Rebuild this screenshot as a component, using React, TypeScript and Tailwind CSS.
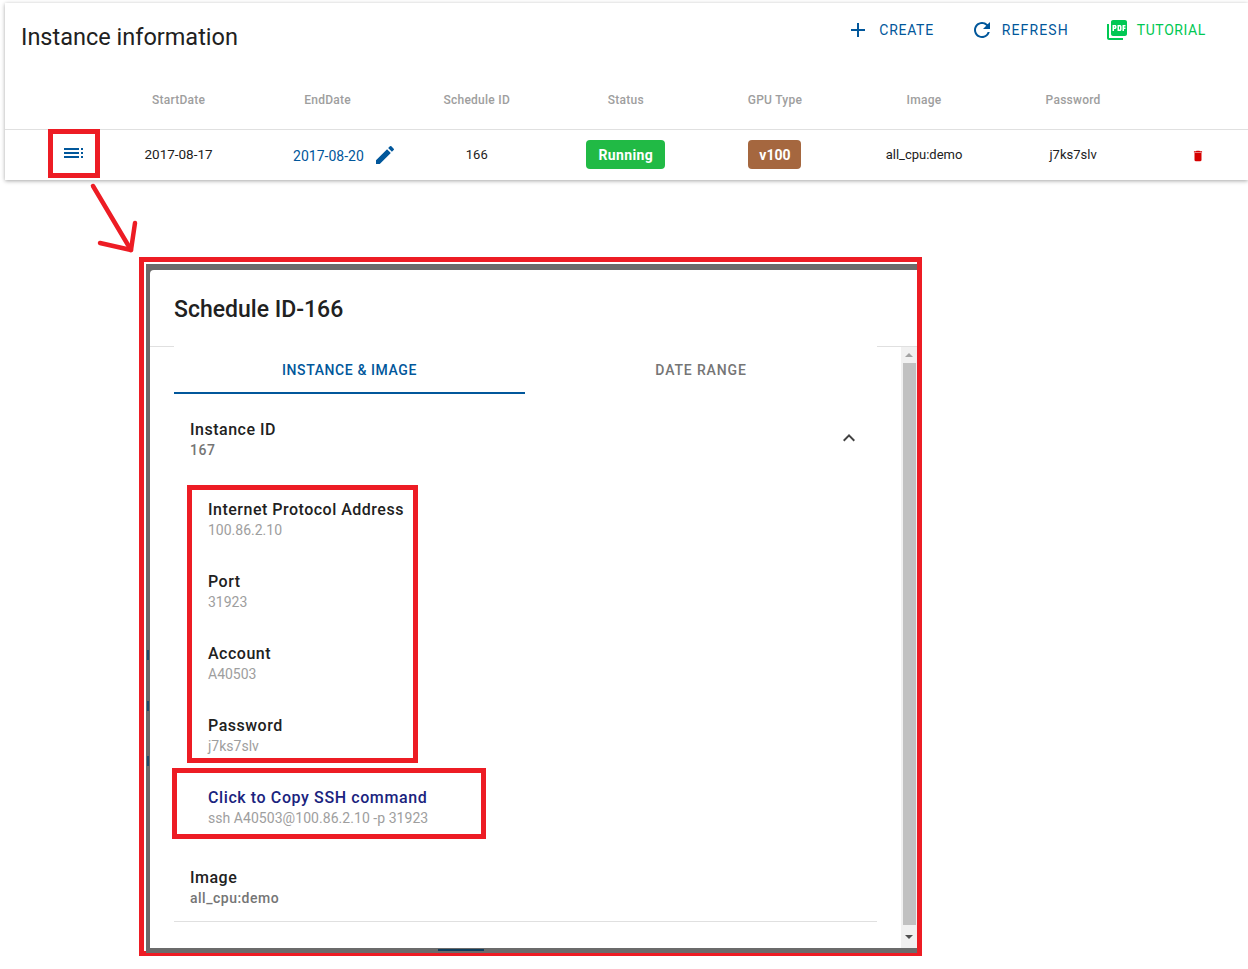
import { MdAdd, MdDelete, MdEdit, MdExpandLess, MdPictureAsPdf, MdRefresh } from "react-icons/md";

const HEADERS = ["StartDate", "EndDate", "Schedule ID", "Status", "GPU Type", "Image", "Password"];

const DETAILS = [
	{ label: "Internet Protocol Address", value: "100.86.2.10" },
	{ label: "Port", value: "31923" },
	{ label: "Account", value: "A40503" },
	{ label: "Password", value: "j7ks7slv" },
];

function MenuDots() {
	return (
		<svg width="19" height="10" viewBox="0 0 19 10" fill="#01579b" className="-ml-px">
			<rect x="0" y="0" width="15" height="2" />
			<rect x="0" y="4" width="15" height="2" />
			<rect x="0" y="8" width="15" height="2" />
			<rect x="17" y="0" width="2" height="2" />
			<rect x="17" y="4" width="2" height="2" />
			<rect x="17" y="8" width="2" height="2" />
		</svg>
	);
}

function InstanceCard() {
	return (
		<div className="ml-[5px] mt-[3px] h-[177px] bg-white shadow-[0_1px_4px_rgba(0,0,0,0.35)]">
			<div className="flex h-[74px] items-start justify-between pl-4 pr-[42px]">
				<h1 className="mt-[19px] text-[23.5px] leading-[30px] text-[#212121]">Instance information</h1>
				<div className="mt-[15px] flex items-center gap-9 text-sm leading-6">
					<button type="button" className="flex items-center tracking-[0.7px] text-[#01579b]">
						<MdAdd size={24} className="mr-[9px]" />
						CREATE
					</button>
					<button type="button" className="flex items-center tracking-[1.1px] text-[#01579b]">
						<MdRefresh size={24} className="mr-2" />
						REFRESH
					</button>
					<button type="button" className="flex items-center tracking-[0.6px] text-[#00c853]">
						<MdPictureAsPdf size={24} className="mr-2" />
						TUTORIAL
					</button>
				</div>
			</div>
			<div className="grid h-[53px] grid-cols-[99px_repeat(7,149.1px)_1fr] items-center border-b border-[#e0e0e0] pb-[6px] text-xs font-medium tracking-[0.25px] text-[#9e9e9e]">
				<span />
				{HEADERS.map((h) => (
					<span key={h} className="text-center">
						{h}
					</span>
				))}
			</div>
			<div className="grid h-[50px] grid-cols-[99px_repeat(7,149.1px)_1fr] items-center pb-px text-[13px] text-[#212121]">
				<div className="flex h-[48px] items-start pl-[43px]">
					<div className="-mt-[2px] flex h-[49px] w-[52px] shrink-0 items-center justify-center border-[5px] border-[#ed1c24]">
						<MenuDots />
					</div>
				</div>
				<span className="text-center text-[13.5px]">2017-08-17</span>
				<div className="flex items-center pl-[40px] text-sm text-[#01579b]">
					<span className="mt-[3px]">2017-08-20</span>
					<MdEdit size={24} className="ml-[9px]" />
				</div>
				<span className="text-center">166</span>
				<div className="flex justify-center">
					<span className="flex h-[29px] w-[79px] items-center justify-center rounded bg-[#21ba45] text-sm font-bold tracking-[0.4px] text-white">
						Running
					</span>
				</div>
				<div className="flex justify-center">
					<span className="flex h-[29px] w-[53px] items-center justify-center rounded bg-[#a5673f] text-sm font-bold text-white">
						v100
					</span>
				</div>
				<span className="text-center">all_cpu:demo</span>
				<span className="text-center">j7ks7slv</span>
				<div className="flex justify-center">
					<MdDelete size={14} className="mt-[2px] text-[#d50000]" />
				</div>
			</div>
		</div>
	);
}

function Field({ label, value, strong }: { label: string; value: string; strong?: boolean }) {
	return (
		<div className="pt-px">
			<div className="text-base leading-5 font-medium tracking-[0.5px] text-[#212121]">{label}</div>
			<div className={`text-sm leading-5 ${strong ? "font-medium tracking-[0.5px] text-[#757575]" : "text-[#9e9e9e]"}`}>{value}</div>
		</div>
	);
}

function Scrollbar() {
	return (
		<div className="flex w-4 shrink-0 flex-col items-center bg-[#f1f1f1]">
			<div className="flex h-4 items-center justify-center">
				<div className="h-0 w-0 border-x-[4px] border-b-[4px] border-x-transparent border-b-[#a3a3a3]" />
			</div>
			<div className="ml-px w-[13px] flex-1 bg-[#c1c1c1]" />
			<div className="flex h-[23px] items-center justify-center">
				<div className="h-0 w-0 border-x-[4px] border-t-[4px] border-x-transparent border-t-[#505050]" />
			</div>
		</div>
	);
}

function ScheduleDialog() {
	return (
		<div className="relative ml-[139px] mt-[77px] h-[699px] w-[783px] border-[5px] border-[#ed1c24] bg-white pl-[2px] pt-[2px]">
			<div className="h-[689px] bg-[#6b6b6b] pb-[3px] pl-1 pt-[6px]">
				<div className="flex h-[678px] w-[767px] flex-col overflow-hidden rounded-tl-sm bg-white">
					<div className="flex h-[76px] shrink-0 items-start pl-6 pt-[25px]">
						<h2 className="text-[23px] leading-[30px] font-medium text-[#212121]">Schedule ID-166</h2>
					</div>
					<div className="flex min-h-0 flex-1 border-t border-[#e0e0e0]">
						<div className="min-w-0 flex-1 px-6">
							<div className="-mt-px flex h-[48px] bg-white text-sm font-medium tracking-[0.6px]">
								<div className="flex w-[351px] items-center justify-center border-b-2 border-[#01579b] pt-[2px] text-[#01579b]">
									INSTANCE &amp; IMAGE
								</div>
								<div className="flex flex-1 items-center justify-center tracking-[0.85px] text-[#757575]">DATE RANGE</div>
							</div>
							<div className="relative h-[91px] pl-4 pt-[25px]">
								<Field label="Instance ID" value="167" strong />
								<MdExpandLess size={24} className="absolute right-4 top-[32px] text-[#424242]" />
							</div>
							<div className="ml-[13px] h-[278px] w-[231px] border-[5px] border-[#ed1c24] pl-4 pt-[9px]">
								{DETAILS.map((d) => (
									<div key={d.label} className="h-[72px] whitespace-nowrap">
										<Field label={d.label} value={d.value} />
									</div>
								))}
							</div>
							<div className="-ml-[2px] mt-[5px] h-[71px] w-[314px] border-[5px] border-[#ed1c24] pl-[31px] pt-[15px]">
								<div className="text-base leading-5 font-medium tracking-[0.6px] text-[#1a237e]">Click to Copy SSH command</div>
								<div className="text-sm leading-5 tracking-[0.05px] text-[#9e9e9e]">ssh A40503@100.86.2.10 -p 31923</div>
							</div>
							<div className="mt-[28px] border-b border-[#e0e0e0] pb-[13px] pl-4">
								<Field label="Image" value="all_cpu:demo" strong />
							</div>
						</div>
						<Scrollbar />
					</div>
				</div>
			</div>
			{/* bits of the page behind the overlay, showing round the dialog */}
			<div className="absolute left-[3px] top-[388px] h-[10px] w-[2px] bg-[#1f4a6b]" />
			<div className="absolute left-[3px] top-[439px] h-[10px] w-[2px] bg-[#1f4a6b]" />
			<div className="absolute left-[3px] top-[494px] h-[10px] w-[2px] bg-[#1f4a6b]" />
			<div className="absolute bottom-0 left-[294px] h-[2px] w-[46px] bg-[#0f3c5c]" />
		</div>
	);
}

export default function App() {
	return (
		<div
			className="relative h-[969px] w-[1248px] overflow-hidden bg-white"
			style={{ fontFamily: "Roboto, 'Liberation Sans', sans-serif" }}
		>
			<InstanceCard />
			{/* hand drawn arrow from the menu button to the dialog */}
			<svg className="absolute left-0 top-0" width="160" height="270" fill="none" stroke="#ed1c24" strokeWidth="4.5" strokeLinecap="round" strokeLinejoin="round">
				<path d="M93 186 L131 250" />
				<path d="M135 223 L131 250 L100 243" />
			</svg>
			<ScheduleDialog />
		</div>
	);
}
